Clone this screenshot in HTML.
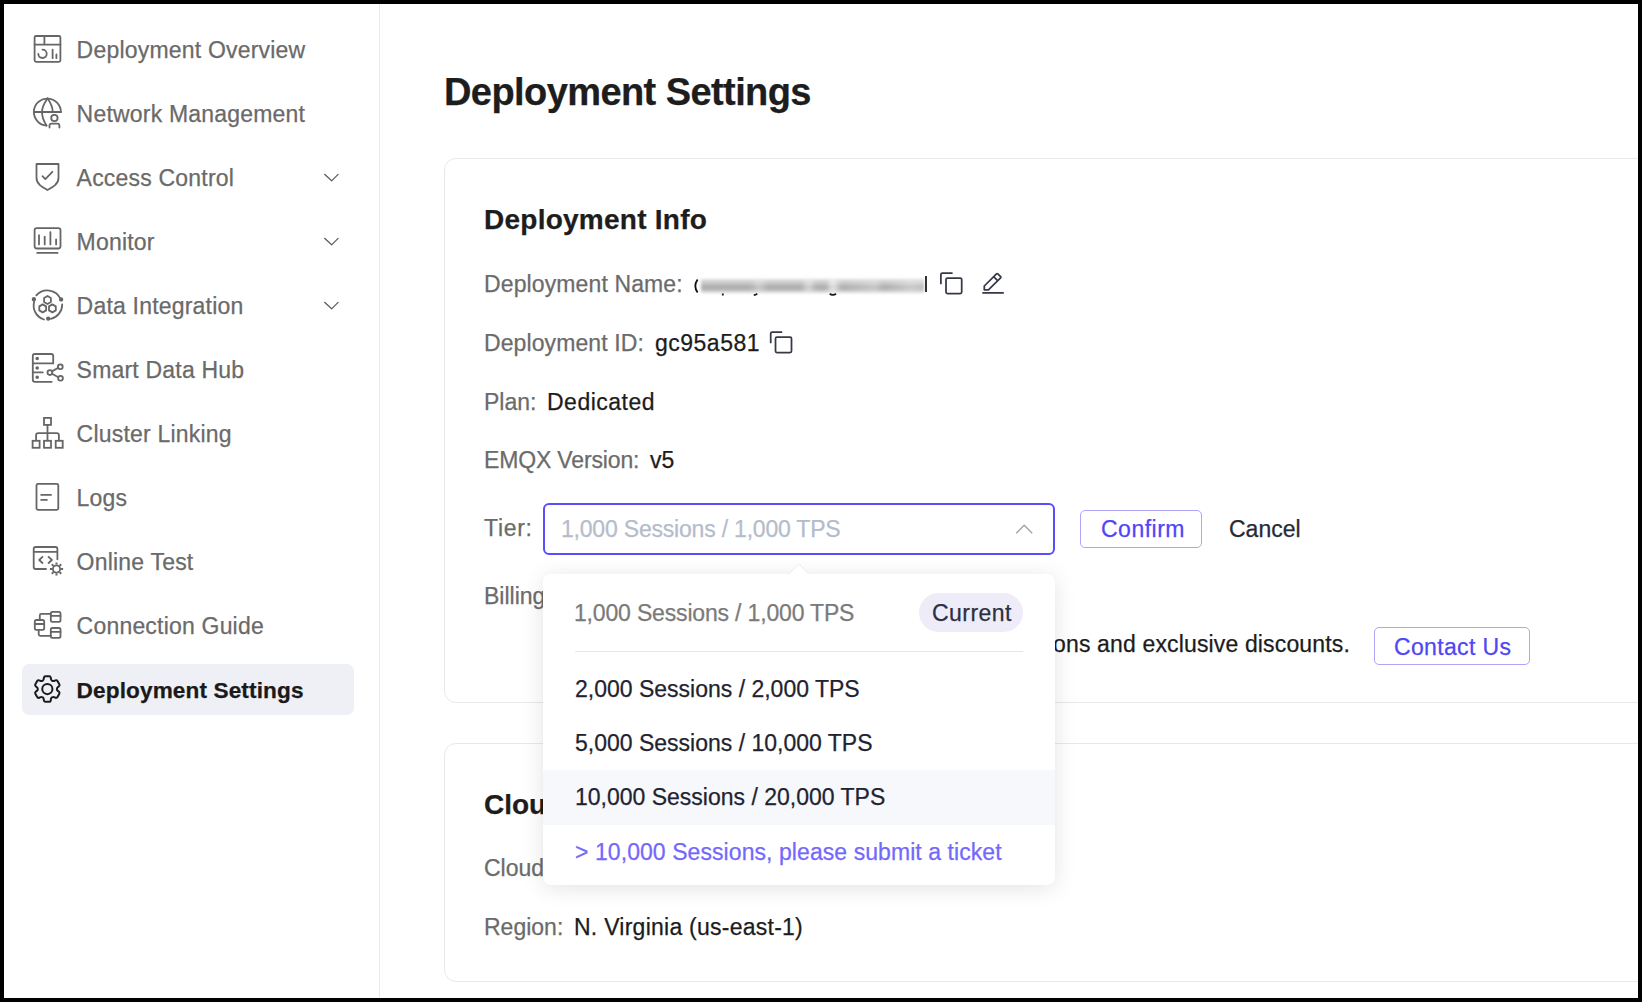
<!DOCTYPE html>
<html>
<head>
<meta charset="utf-8">
<style>
*{margin:0;padding:0;box-sizing:border-box}
html,body{width:1642px;height:1002px;overflow:hidden;background:#000}
body{font-family:"Liberation Sans",sans-serif;position:relative}
#frame{position:absolute;left:4px;top:4px;width:1634px;height:994px;background:#fff;overflow:hidden}
.t{position:absolute;white-space:nowrap;line-height:23px;font-size:23px;-webkit-text-stroke:0.25px currentColor}
.nav{color:#6a6a6a;letter-spacing:0.2px}
.lbl{color:#6b6b6b}
.val{color:#1c1c1c}
svg{position:absolute;left:0;top:0;overflow:visible}
</style>
</head>
<body>
<div id="frame"></div>
<!-- page-level absolute layer (coordinates are page pixels) -->
<div id="page" style="position:absolute;left:0;top:0;width:1642px;height:1002px;">

<!-- sidebar border -->
<div style="position:absolute;left:379px;top:4px;width:1px;height:994px;background:#e9e9e9"></div>
<!-- active bg -->
<div style="position:absolute;left:22px;top:664px;width:332px;height:51px;background:#eff0f5;border-radius:7px"></div>

<!-- sidebar labels -->
<div class="t nav" style="left:76.6px;top:38.9px">Deployment Overview</div>
<div class="t nav" style="left:76.6px;top:102.9px">Network Management</div>
<div class="t nav" style="left:76.6px;top:166.9px">Access Control</div>
<div class="t nav" style="left:76.6px;top:230.9px">Monitor</div>
<div class="t nav" style="left:76.6px;top:294.9px">Data Integration</div>
<div class="t nav" style="left:76.6px;top:358.9px">Smart Data Hub</div>
<div class="t nav" style="left:76.6px;top:422.9px">Cluster Linking</div>
<div class="t nav" style="left:76.6px;top:486.9px">Logs</div>
<div class="t nav" style="left:76.6px;top:550.9px">Online Test</div>
<div class="t nav" style="left:76.6px;top:614.9px">Connection Guide</div>
<div class="t" style="left:76.6px;top:678.9px;color:#1a1a1a;font-weight:bold;font-size:22.6px;letter-spacing:0.12px">Deployment Settings</div>

<!-- SIDEBAR ICONS -->
<svg width="400" height="1002" viewBox="0 0 400 1002" fill="none" stroke="#666" stroke-width="1.8" stroke-linecap="round" stroke-linejoin="round">
  <!-- overview -->
  <rect x="34.6" y="36" width="25.8" height="25.8" rx="1.5"/>
  <path d="M34.6 44.6H60.4M44.4 36V44.6"/>
  <path d="M38.3 53.8A4.2 4.2 0 1 0 42.5 49.6"/>
  <path d="M52.6 49.6V58.2M56.4 54.4V58.2"/>
  <!-- network -->
  <path d="M60.9 112A13.5 13.5 0 1 0 46.5 125.5"/>
  <path d="M34 112H60.9"/>
  <path d="M47.5 98.5C43.6 104 42 108 42 112C42 117 43.6 121 46.5 125.5"/>
  <path d="M47.5 98.5C50.6 102.5 52.5 107 52.8 112"/>
  <circle cx="54.4" cy="118" r="3.2"/>
  <path d="M49.5 127.5V125.6A2 2 0 0 1 51.5 123.6H57.4A2 2 0 0 1 59.4 125.6V127.5"/>
  <!-- access control shield -->
  <path d="M36.5 164H58.5V178C58.5 184 53 187 47.5 190C42 187 36.5 184 36.5 178Z"/>
  <path d="M42.5 176.2L45.3 179.2L52.4 171.8"/>
  <!-- monitor -->
  <rect x="34.6" y="228.1" width="25.9" height="20.4" rx="2.2"/>
  <path d="M39 235.2V244.4M44.7 236.7V244.4M50.4 232.1V244.4M56.1 239.5V244.4M37.2 252.9H57.6"/>
  <!-- data integration -->
  <path d="M36.3 295.4A14.6 14.6 0 0 1 60.6 299"/>
  <path d="M34.2 301.5A14.6 14.6 0 0 0 44 319.5"/>
  <path d="M62.2 304.4A14.6 14.6 0 0 1 50.8 318.8"/>
  <circle cx="33.9" cy="299.2" r="1.3" fill="#666"/>
  <circle cx="61.1" cy="299.4" r="1.3" fill="#666"/>
  <circle cx="48.2" cy="318.6" r="1.3" fill="#666"/>
  <path d="M47.5 296L50.9 298V302L47.5 304L44.1 302V298Z"/>
  <path d="M42.7 304.4L46.1 306.4V310.4L42.7 312.4L39.3 310.4V306.4Z"/>
  <path d="M52.4 304.4L55.8 306.4V310.4L52.4 312.4L49 310.4V306.4Z"/>
  <!-- smart data hub -->
  <path d="M51.7 381.8H34.8A2 2 0 0 1 32.8 379.8V356A2 2 0 0 1 34.8 354H51.2A2 2 0 0 1 53.2 356V363.4H32.8"/>
  <path d="M32.8 372.4H42.7"/>
  <circle cx="37.2" cy="358.5" r="0.9" fill="#666"/>
  <circle cx="37.2" cy="368" r="0.9" fill="#666"/>
  <circle cx="37.2" cy="377.3" r="0.9" fill="#666"/>
  <circle cx="49.9" cy="372.6" r="2.4"/>
  <circle cx="60.3" cy="366.7" r="2.4"/>
  <circle cx="60.5" cy="378.3" r="2.4"/>
  <path d="M51.9 371.4L58.3 367.8M51.9 373.8L58.4 377.2"/>
  <!-- cluster linking -->
  <rect x="44" y="417.9" width="7" height="7" stroke-linejoin="miter"/>
  <rect x="32.6" y="440.8" width="7" height="7" stroke-linejoin="miter"/>
  <rect x="44" y="440.8" width="7" height="7" stroke-linejoin="miter"/>
  <rect x="55.7" y="440.8" width="7" height="7" stroke-linejoin="miter"/>
  <path d="M47.5 425V440.8M36.1 440.8V435A2 2 0 0 1 38.1 433.1H56.9A2 2 0 0 1 58.9 435V440.8" stroke-linecap="butt"/>
  <!-- logs -->
  <rect x="36.5" y="483.9" width="21.8" height="25.9" rx="1.5"/>
  <path d="M41.2 494.9H51M41.2 499.9H46.9"/>
  <!-- online test -->
  <path d="M46 569H35.7A2 2 0 0 1 33.7 567V549A2 2 0 0 1 35.7 547H55.4A2 2 0 0 1 57.4 549V559.3M33.7 551.9H57.4"/>
  <path d="M42.5 556.9L39.2 560L42.5 563M48.6 556.9L51.9 560L48.6 563"/>
  <circle cx="56.5" cy="569" r="3.6"/>
  <path d="M60.90 569.00L63.10 569.00M59.61 572.11L61.17 573.67M56.50 573.40L56.50 575.60M53.39 572.11L51.83 573.67M52.10 569.00L49.90 569.00M53.39 565.89L51.83 564.33M56.50 564.60L56.50 562.40M59.61 565.89L61.17 564.33" stroke-linecap="butt" stroke-width="2"/>
  <!-- connection guide -->
  <rect x="34.8" y="620" width="9.4" height="9.9" rx="1.6"/>
  <path d="M34.8 624H44.2"/>
  <rect x="50.8" y="611.9" width="9.7" height="9.9" rx="1.6"/>
  <path d="M50.8 615.9H60.5"/>
  <rect x="50.8" y="628" width="9.7" height="9.8" rx="1.6"/>
  <path d="M50.8 631.9H60.5"/>
  <path d="M39.8 620V615.4A1.5 1.5 0 0 1 41.3 613.9H50.8M38.7 629.9V634.3A1.5 1.5 0 0 0 40.2 635.8H50.8"/>
  <!-- chevrons -->
  <path d="M324.6 174.3L331.6 180.8L338.1 174.3M324.6 238.3L331.6 244.8L338.1 238.3M324.6 302.3L331.6 308.8L338.1 302.3" stroke="#5a5a5a" stroke-width="1.2"/>
  <!-- gear active -->
  <g transform="translate(30.3,672) scale(1.42)" stroke="#1a1a1a" stroke-width="1.4">
    <path d="M9.594 3.94c.09-.542.56-.94 1.11-.94h2.593c.55 0 1.02.398 1.11.94l.213 1.281c.063.374.313.686.645.87.074.04.147.083.22.127.325.196.72.257 1.075.124l1.217-.456a1.125 1.125 0 0 1 1.37.49l1.296 2.247a1.125 1.125 0 0 1-.26 1.431l-1.003.827c-.293.241-.438.613-.43.992a7.723 7.723 0 0 1 0 .255c-.008.378.137.75.43.991l1.004.827c.424.35.534.955.26 1.43l-1.298 2.247a1.125 1.125 0 0 1-1.369.491l-1.217-.456c-.355-.133-.75-.072-1.076.124a6.470 6.470 0 0 1-.22.128c-.331.183-.581.495-.644.869l-.213 1.281c-.09.543-.56.94-1.11.94h-2.594c-.55 0-1.019-.398-1.110-.94l-.213-1.281c-.062-.374-.312-.686-.644-.87a6.520 6.520 0 0 1-.22-.127c-.325-.196-.72-.257-1.076-.124l-1.217.456a1.125 1.125 0 0 1-1.369-.49l-1.297-2.247a1.125 1.125 0 0 1 .26-1.431l1.004-.827c.292-.24.437-.613.43-.991a6.932 6.932 0 0 1 0-.255c.007-.38-.138-.751-.43-.992l-1.004-.827a1.125 1.125 0 0 1-.26-1.430l1.297-2.247a1.125 1.125 0 0 1 1.37-.491l1.216.456c.356.133.751.072 1.076-.124.072-.044.146-.086.22-.128.332-.183.582-.495.644-.869l.214-1.280Z"/>
    <circle cx="12" cy="12" r="3.6"/>
  </g>
</svg>

<!-- MAIN -->

<!-- title -->
<div class="t" style="left:444px;top:72.8px;font-size:38px;line-height:38px;font-weight:bold;color:#1d1d1d;letter-spacing:-0.58px">Deployment Settings</div>

<!-- card 1 -->
<div style="position:absolute;left:444px;top:158px;width:1300px;height:545px;border:1px solid #e8e8e8;border-radius:12px;background:#fff"></div>
<div class="t" style="left:484px;top:206.3px;font-size:28px;line-height:28px;font-weight:bold;color:#1d1d1d;letter-spacing:0.25px">Deployment Info</div>

<div class="t lbl" style="left:484px;top:272.6px;letter-spacing:0.12px">Deployment Name:</div>
<svg width="1642" height="1002" fill="none" stroke="#111" stroke-width="1.8"><path d="M697.6 279.5C694.8 283.5 694.8 288.5 697.6 292.5"/></svg>
<div style="position:absolute;left:701px;top:279px;width:223px;height:14px;filter:blur(1.6px);background:linear-gradient(#e0e0e0,#c3c3c3 35%,#a6a6a6 60%,#c8c8c8 85%,#e4e4e4)"></div>
<div style="position:absolute;left:701px;top:279px;width:223px;height:14px;filter:blur(2px);background:linear-gradient(90deg,rgba(255,255,255,0) 0%,rgba(255,255,255,0) 22%,rgba(255,255,255,.35) 26%,rgba(255,255,255,0) 30%,rgba(255,255,255,0) 45%,rgba(255,255,255,.5) 48%,rgba(255,255,255,0) 52%,rgba(255,255,255,0) 56%,rgba(255,255,255,.7) 59%,rgba(255,255,255,0) 63%,rgba(255,255,255,.3) 78%,rgba(255,255,255,0) 82%,rgba(255,255,255,.35) 94%,rgba(255,255,255,.2) 100%)"></div>
<svg width="1642" height="1002" fill="none" stroke="#1a1a1a" stroke-width="1.8"><path d="M722.8 293.4V295.6M753.8 295.2C755 295 756.3 294.4 757.2 293.6M829.8 293.6C831.2 295.3 834.2 295.3 836 293.8"/></svg>
<div style="position:absolute;left:925px;top:276.2px;width:1.6px;height:15.4px;background:#333"></div>
<!-- copy icon + edit -->
<svg width="1642" height="1002" fill="none" stroke="#363a47" stroke-width="1.75" stroke-linecap="butt" stroke-linejoin="round">
  <path d="M940.9 284.2V274.5A1.5 1.5 0 0 1 942.4 273H952.6"/>
  <rect x="946" y="278" width="15.7" height="15.6" rx="1.5"/>
  <path d="M770.7 343.2V333.5A1.5 1.5 0 0 1 772.2 332H782.2"/>
  <rect x="775.5" y="337" width="16" height="15.6" rx="1.5"/>
  <path d="M982.3 292.9H1003.8"/>
  <path d="M984.3 289.8V286L996.5 273.8a0.9 0.9 0 0 1 1.3 0L1000.6 276.6a0.9 0.9 0 0 1 0 1.3L988.4 289.8Z"/>
  <path d="M993.6 276.7L997.6 280.7"/>
</svg>

<div class="t lbl" style="left:484px;top:331.5px;letter-spacing:0.1px">Deployment ID:</div>
<div class="t val" style="left:655px;top:331.5px;letter-spacing:0.5px">gc95a581</div>

<div class="t lbl" style="left:484px;top:390.5px">Plan:</div>
<div class="t val" style="left:547px;top:390.5px;letter-spacing:0.5px">Dedicated</div>

<div class="t lbl" style="left:484px;top:449.3px;letter-spacing:-0.15px">EMQX Version:</div>
<div class="t val" style="left:650px;top:449.3px">v5</div>

<div class="t lbl" style="left:484px;top:517.3px;letter-spacing:0.7px">Tier:</div>
<div style="position:absolute;left:543px;top:503px;width:512px;height:52px;border:2px solid #5a4dfc;border-radius:6px;background:#fff"></div>
<div class="t" style="left:561px;top:518.3px;color:#b4bccb;letter-spacing:-0.2px">1,000 Sessions / 1,000 TPS</div>
<svg width="1642" height="1002" fill="none" stroke="#a3a3a3" stroke-width="1.4">
  <path d="M1016.2 533.2L1024.2 525.2L1032.2 533.2"/>
</svg>
<div style="position:absolute;left:1080px;top:510px;width:122px;height:38px;border:1px solid #aea6fb;border-radius:5px"></div>
<div class="t" style="left:1101px;top:518.1px;color:#5046f6;letter-spacing:0.5px">Confirm</div>
<div class="t" style="left:1229px;top:518.1px;color:#262a36">Cancel</div>

<div class="t lbl" style="left:484px;top:585.1px">Billing</div>
<div class="t val" id="disc" style="left:1053px;top:633.1px;letter-spacing:0.15px">ons and exclusive discounts.</div>
<div style="position:absolute;left:1374px;top:627px;width:156px;height:38px;border:1px solid #aea6fb;border-radius:5px"></div>
<div class="t" style="left:1394px;top:635.6px;color:#5046f6;letter-spacing:0.35px">Contact Us</div>

<!-- card 2 -->
<div style="position:absolute;left:444px;top:743px;width:1300px;height:239px;border:1px solid #e8e8e8;border-radius:12px;background:#fff"></div>
<div class="t" style="left:484px;top:790.5px;font-size:28px;line-height:28px;font-weight:bold;color:#1d1d1d">Cloud Provider</div>
<div class="t lbl" style="left:484px;top:857px">Cloud Provider:</div>
<div class="t lbl" style="left:484px;top:916.4px">Region:</div>
<div class="t val" style="left:574px;top:916.4px;letter-spacing:0.25px">N. Virginia (us-east-1)</div>

<!-- POPUP -->
<div style="position:absolute;left:543px;top:574px;width:512px;height:311px;background:#fff;border-radius:8px;box-shadow:0 3px 22px rgba(0,0,0,0.115)"></div>
<svg width="1642" height="1002">
  <path d="M788.5 574.5L799 564L809.5 574.5Z" fill="#fff" stroke="#ececf0" stroke-width="1"/>
  <rect x="786" y="574" width="26" height="3" fill="#fff"/>
</svg>
<div class="t" style="left:574px;top:601.7px;color:#7a7a7a;letter-spacing:-0.17px">1,000 Sessions / 1,000 TPS</div>
<div style="position:absolute;left:919px;top:593px;width:104px;height:39px;border-radius:20px;background:#efecfa"></div>
<div class="t" style="left:932px;top:601.8px;color:#2b3040;letter-spacing:0.45px">Current</div>
<div style="position:absolute;left:575px;top:651px;width:448px;height:1px;background:#e6e6e6"></div>
<div class="t" style="left:575px;top:677.7px;color:#1f2330">2,000 Sessions / 2,000 TPS</div>
<div class="t" style="left:575px;top:732px;color:#1f2330">5,000 Sessions / 10,000 TPS</div>
<div style="position:absolute;left:543px;top:770px;width:512px;height:55px;background:#f7f8fc"></div>
<div class="t" style="left:575px;top:786.4px;color:#1f2330">10,000 Sessions / 20,000 TPS</div>
<div class="t" style="left:575px;top:840.9px;color:#7468fa;letter-spacing:0.07px">&gt; 10,000 Sessions, please submit a ticket</div>


<div style="position:absolute;left:0;top:0;width:1642px;height:4px;background:#000"></div>
<div style="position:absolute;left:0;top:998px;width:1642px;height:4px;background:#000"></div>
<div style="position:absolute;left:0;top:0;width:4px;height:1002px;background:#000"></div>
<div style="position:absolute;left:1638px;top:0;width:4px;height:1002px;background:#000"></div>
</div>
</body>
</html>
